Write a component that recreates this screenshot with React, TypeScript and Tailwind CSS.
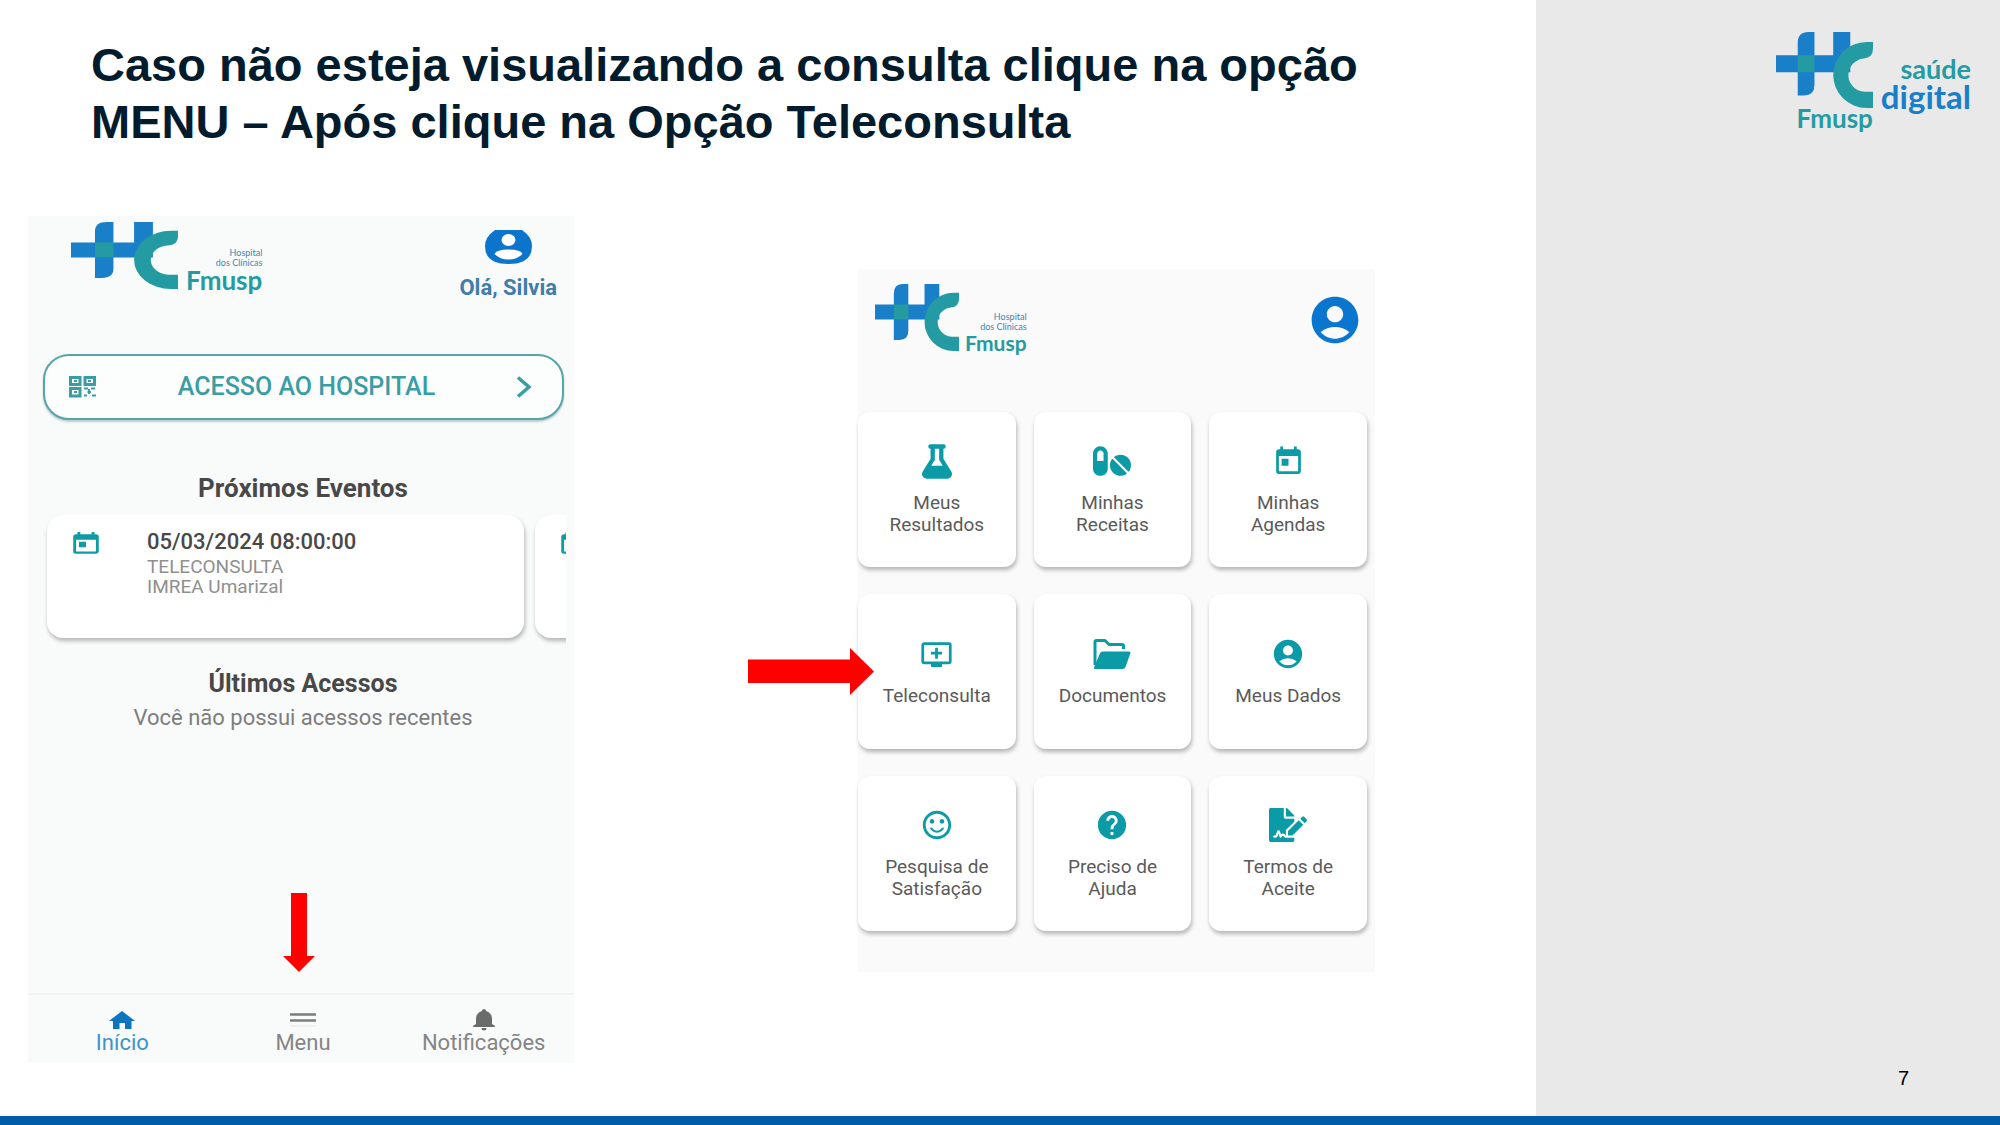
import React from "react";
import {
  MdAccountCircle,
  MdAddToQueue,
  MdHelp,
  MdSentimentSatisfiedAlt,
  MdToday,
} from "react-icons/md";
import { FaFileSignature, FaFlask, FaPills } from "react-icons/fa";

function HcMark({ className }: { className: string }) {
  return (
    <svg viewBox="0 0 290 229" preserveAspectRatio="none" className={className} aria-hidden="true">
      <path d="M0 70H65V32Q65 0 97 0H115V70H171V0H222V121H115V160Q115 191 84 191H65V121H0Z" fill="#1a7fc9" />
      <rect x="65" y="70" width="50" height="51" fill="#249ba2" />
      <path
        d="M290 30H271A100 99.500 0 0 0 271 229H290V180H271A50 50 0 0 1 262 80Q290 78 290 50Z"
        fill="#249ba2"
      />
    </svg>
  );
}

function FolderIcon({ className }: { className: string }) {
  return (
    <svg viewBox="0 0 38 30" className={className} aria-hidden="true">
      <path
        d="M2 26V3Q2 1.500 3.500 1.500H12L16 5.500H29Q30.500 5.500 30.500 7V10"
        fill="none"
        stroke="currentColor"
        strokeWidth="3"
        strokeLinejoin="round"
      />
      <path d="M9.500 12.500H36Q38 12.500 37.300 14.500L32.500 28Q31.800 30 29.500 30H2Q.5 30 1.200 28L7 14.200Q7.700 12.500 9.500 12.500Z" fill="currentColor" />
    </svg>
  );
}

function QrIcon() {
  return (
    <svg viewBox="0 0 28 22" className="h-[22px] w-7" fill="none" stroke="currentColor" strokeWidth="3" aria-hidden="true">
      <rect x="1.500" y="1.500" width="9.500" height="7" />
      <rect x="16" y="1.500" width="9.500" height="7" />
      <rect x="1.500" y="12.500" width="9.500" height="7.500" />
      <path d="M5 5H8M19 5H22M5 16H8" strokeWidth="2" />
      <path d="M15 12.500H19M22 12.500H26M18.500 16H22M15 19.500H18M23 19.500H27M20 13V18" strokeWidth="2" />
    </svg>
  );
}

function HospitalLogo({ mark, text }: { mark: string; text: string }) {
  return (
    <div className="flex items-end">
      <HcMark className={mark} />
      <div className={text}>
        <span className="block text-[9px] leading-[10px] text-[#3c86b4]">Hospital</span>
        <span className="block text-[9px] leading-[10px] text-[#3c86b4]">dos Clínicas</span>
        <span className="block font-bold text-[#249ba2]">Fmusp</span>
      </div>
    </div>
  );
}

function HomeScreen() {
  return (
    <section className="relative flex min-h-[847px] w-[546px] flex-col bg-[#f9fafa] font-['Roboto',sans-serif]">
      <header className="flex items-start justify-between pt-1.5 pr-[17px] pl-[43px]">
        <HospitalLogo
          mark="h-[67px] w-[107px]"
          text="-mb-[3px] ml-2 text-right font-['Lato',sans-serif] [&>span:last-child]:text-[26px] [&>span:last-child]:leading-6"
        />
        <button type="button" className="flex flex-col items-center pt-2">
          <svg viewBox="0 0 47 34" className="h-[34px] w-[47px] text-[#0b74cc]" aria-hidden="true">
            <path d="M10 0H37Q47 7 47 16Q47 34 23.500 34Q0 34 0 16Q0 7 10 0Z" fill="currentColor" />
            <ellipse cx="23.500" cy="10" rx="7" ry="6" fill="#fff" />
            <path d="M9.500 24Q11 19.500 23.500 19.500Q36 19.500 37.500 24Q32 29.500 23.500 29.500Q15 29.500 9.500 24Z" fill="#fff" />
          </svg>
          <span className="mt-3 text-[22px] leading-[23px] font-bold text-[#3f7dab]">Olá, Silvia</span>
        </button>
      </header>

      <button
        type="button"
        className="mt-[55px] mr-2.5 ml-[15px] flex h-[66px] items-center justify-between rounded-[26px] border-2 border-[#57a5a8] bg-[#fcfdfd] pr-[30px] pl-6 text-[#3a9da3] shadow-[0_2px_2px_rgba(70,130,130,0.35)]"
      >
        <QrIcon />
        <span className="text-[25px] leading-7 font-medium">ACESSO AO HOSPITAL</span>
        <svg viewBox="0 0 16 22" className="h-[22px] w-4" fill="none" stroke="currentColor" strokeWidth="3.500" aria-hidden="true">
          <path d="M2 1.500L13 11L2 20.500" />
        </svg>
      </button>

      <h2 className="mt-[54px] pl-1 text-center text-[26px] leading-7 font-bold text-[#484848]">Próximos Eventos</h2>
      <div className="mt-[13px] mr-2 ml-[15px] flex gap-[11px] overflow-hidden pb-2 pl-1">
        <article className="flex h-[123px] w-[477px] shrink-0 rounded-2xl bg-white pt-3 pl-[22px] shadow-[1px_3px_4px_rgba(0,0,0,0.28)]">
          <MdToday className="mt-1 h-[26px] w-[34px] text-[#0f9ba4]" preserveAspectRatio="none" />
          <div className="ml-11 text-[19px] leading-5 text-[#8f8f8f]">
            <p className="text-[22px] leading-[30px] font-medium text-[#484848]">05/03/2024 08:00:00</p>
            <p>TELECONSULTA</p>
            <p>IMREA Umarizal</p>
          </div>
        </article>
        <article className="h-[123px] w-[477px] shrink-0 rounded-2xl bg-white pt-3 pl-[22px] shadow-[1px_3px_4px_rgba(0,0,0,0.28)]">
          <MdToday className="mt-1 h-[26px] w-[34px] text-[#0f9ba4]" preserveAspectRatio="none" />
        </article>
      </div>

      <h2 className="mt-6 pl-1 text-center text-[25px] leading-7 font-bold text-[#484848]">Últimos Acessos</h2>
      <p className="mt-2 pl-1 text-center text-[22px] leading-6 text-[#7d7d7d]">Você não possui acessos recentes</p>

      <nav className="mt-auto grid h-[70px] grid-cols-3 border-t-2 border-[#f3f3f3] pt-3.5 pl-1 text-[22px] leading-6 text-[#858585]">
        <a href="#inicio" className="flex flex-col items-center text-[#3f94c8]">
          <svg viewBox="0 0 26 22" className="h-[22px] w-[26px] text-[#0b76bf]" aria-hidden="true">
            <path d="M13 2L26 12H22.500V20H16V14H10.500V20H4V12H0Z" fill="currentColor" />
          </svg>
          Início
        </a>
        <a href="#menu" className="flex flex-col items-center">
          <svg viewBox="0 0 26 22" className="h-[22px] w-[26px]" aria-hidden="true">
            <path d="M0 5.500H26M0 11.500H26" stroke="#7c7c7c" strokeWidth="2.500" />
            <path d="M0 17H26" stroke="#ececec" strokeWidth="1.500" />
          </svg>
          Menu
        </a>
        <a href="#notificacoes" className="flex flex-col items-center">
          <svg viewBox="0 0 24 22" className="h-[22px] w-6 text-[#6b6b6b]" aria-hidden="true">
            <path d="M12 0Q14 0 14 2Q20 4 20 10V15L23 17V18H1V17L4 15V10Q4 4 10 2Q10 0 12 0ZM9.500 19H14.500Q14.500 21.500 12 21.500Q9.500 21.500 9.500 19Z" fill="currentColor" />
          </svg>
          Notificações
        </a>
      </nav>

      <svg viewBox="0 0 32 79" className="absolute bottom-[91px] left-[255px] h-[79px] w-8" aria-hidden="true">
        <path d="M8 0H24V63H32L16 79L0 63H8Z" fill="#ff0000" />
      </svg>
    </section>
  );
}

const tiles = [
  { label: ["Meus", "Resultados"], icon: <FaFlask className="h-[35px] w-[30px]" /> },
  { label: ["Minhas", "Receitas"], icon: <FaPills className="h-[34px] w-[38px]" /> },
  { label: ["Minhas", "Agendas"], icon: <MdToday className="size-[33px]" /> },
  { label: ["Teleconsulta"], icon: <MdAddToQueue className="size-[33px]" /> },
  { label: ["Documentos"], icon: <FolderIcon className="h-[30px] w-[38px]" /> },
  { label: ["Meus Dados"], icon: <MdAccountCircle className="size-[34px]" /> },
  { label: ["Pesquisa de", "Satisfação"], icon: <MdSentimentSatisfiedAlt className="size-[34px]" /> },
  { label: ["Preciso de", "Ajuda"], icon: <MdHelp className="size-[34px]" /> },
  { label: ["Termos de", "Aceite"], icon: <FaFileSignature className="h-[34px] w-[38px]" /> },
];

function MenuScreen() {
  return (
    <section className="relative mt-[53px] min-h-[703px] w-[517px] bg-[#fafafa] font-['Roboto',sans-serif]">
      <header className="flex items-start justify-between pt-[15px] pr-3 pl-[17px]">
        <HospitalLogo
          mark="h-[67px] w-[84px]"
          text="-mb-[3px] ml-1.5 text-right font-['Lato',sans-serif] [&>span:last-child]:text-[21px] [&>span:last-child]:leading-[22px]"
        />
        <button type="button" aria-label="Conta" className="pt-2">
          <MdAccountCircle className="size-14 text-[#0b76cf]" />
        </button>
      </header>
      <div className="mt-[61px] grid grid-cols-3 gap-x-[18px] gap-y-[27px] pr-2">
        {tiles.map((tile) => (
          <button
            key={tile.label.join(" ")}
            type="button"
            className="flex h-[155px] flex-col items-center justify-center gap-[13px] rounded-xl bg-white shadow-[1px_3px_4px_rgba(0,0,0,0.28)]"
          >
            <span className="flex h-9 items-center text-[#0b9ba6]">{tile.icon}</span>
            <span className="text-[19px] leading-[22px] text-[#5a5a5a]">
              {tile.label.map((line) => (
                <span key={line} className="block">{line}</span>
              ))}
            </span>
          </button>
        ))}
      </div>
      <svg viewBox="0 0 126 47" className="absolute top-[379px] -left-[110px] h-[47px] w-[126px]" aria-hidden="true">
        <path d="M0 11.500H102V0L126 23.500L102 47V35H0Z" fill="#ff0000" />
      </svg>
    </section>
  );
}

function SaudeDigitalLogo() {
  return (
    <div className="flex items-start gap-2 font-['Lato',sans-serif] font-bold">
      <div className="flex flex-col items-end text-[#249ba2]">
        <HcMark className="h-[76px] w-[97px]" />
        <span className="text-[26px] leading-5">Fmusp</span>
      </div>
      <div className="flex flex-col items-end pt-[25px]">
        <span className="text-[27px] leading-6 text-[#249ba2]">saúde</span>
        <span className="text-[33px] leading-[30px] text-[#1a7fc9]">digital</span>
      </div>
    </div>
  );
}

export default function App() {
  return (
    <div className="flex min-h-screen flex-col bg-white">
      <div className="flex flex-1">
        <main className="min-w-0 flex-1 pt-9">
          <h1 className="max-w-[1400px] pl-[91px] font-['Liberation_Sans',Arial,sans-serif] text-[47px] leading-[57px] font-bold text-[#031c2d]">
            Caso não esteja visualizando a consulta clique na opção
            <br />
            MENU – Após clique na Opção Teleconsulta
          </h1>
          <div className="mt-[66px] flex items-start justify-between pr-[161px] pl-7">
            <HomeScreen />
            <MenuScreen />
          </div>
        </main>
        <aside className="flex w-[23.2%] flex-col items-end justify-between bg-[#e9e9e9] pt-8 pr-[29px] pb-[26px]">
          <SaudeDigitalLogo />
          <span className="pr-[62px] font-['Liberation_Sans',Arial,sans-serif] text-[20px] leading-6 text-black">7</span>
        </aside>
      </div>
      <footer className="h-[9px] bg-[#005ca8]" />
    </div>
  );
}
